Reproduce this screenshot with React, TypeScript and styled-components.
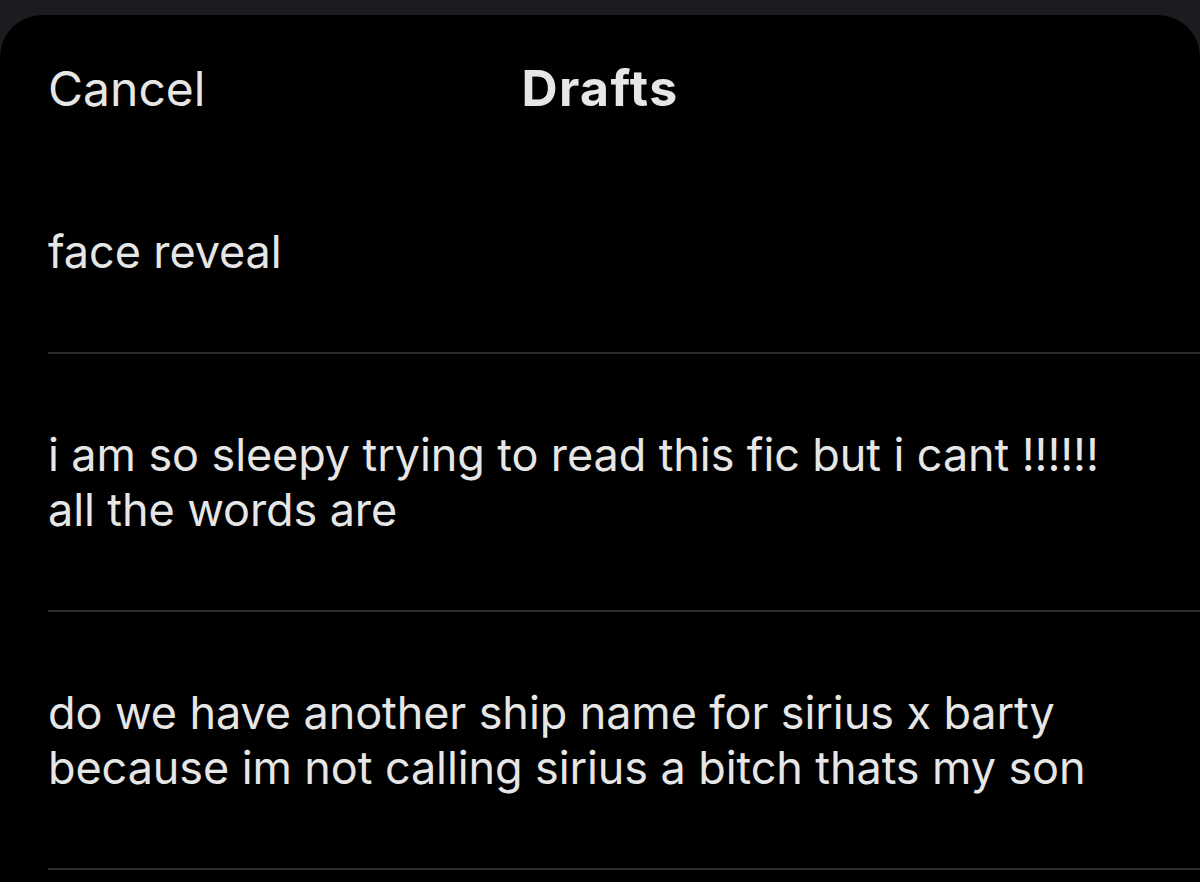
import React from 'react';
import styled, { createGlobalStyle } from 'styled-components';

const GlobalStyle = createGlobalStyle`
  html, body {
    margin: 0;
    padding: 0;
    background: #1b1c20;
  }
  body {
    font-family: Inter, "Liberation Sans", sans-serif;
    -webkit-font-smoothing: antialiased;
  }
`;

const Screen = styled.div`
  width: 1200px;
  height: 882px;
  overflow: hidden;
  padding-top: 15px;
  box-sizing: border-box;
  background: #1b1c20;
`;

const Sheet = styled.div`
  background: #000;
  height: 100%;
  border-radius: 42px 42px 0 0;
  color: #e6e6e6;
`;

const Header = styled.div`
  height: 136px;
  display: grid;
  grid-template-columns: 1fr auto 1fr;
  align-items: center;
  padding: 10px 48px 0;
  box-sizing: border-box;
`;

const HeaderButton = styled.span`
  font-size: 48px;
  font-weight: 400;
  justify-self: start;
`;

const Title = styled.span`
  font-size: 50px;
  font-weight: 700;
  letter-spacing: 1.4px;
`;

const List = styled.div`
  padding-left: 48px;
`;

const DraftRow = styled.div`
  padding: 73px 0;
  border-bottom: 2px solid #2b2b2d;
  font-size: 45px;
  line-height: 55px;
  letter-spacing: -0.1px;
`;

const drafts = [
  ['face reveal'],
  ['i am so sleepy trying to read this fic but i cant !!!!!!', 'all the words are'],
  ['do we have another ship name for sirius x barty', 'because im not calling sirius a bitch thats my son'],
];

export default function App() {
  return (
    <>
      <GlobalStyle />
      <Screen>
        <Sheet>
          <Header>
            <HeaderButton>Cancel</HeaderButton>
            <Title>Drafts</Title>
            <span />
          </Header>
          <List>
            {drafts.map((lines, i) => (
              <DraftRow key={i}>
                {lines.map((l, j) => (
                  <div key={j}>{l}</div>
                ))}
              </DraftRow>
            ))}
          </List>
        </Sheet>
      </Screen>
    </>
  );
}
